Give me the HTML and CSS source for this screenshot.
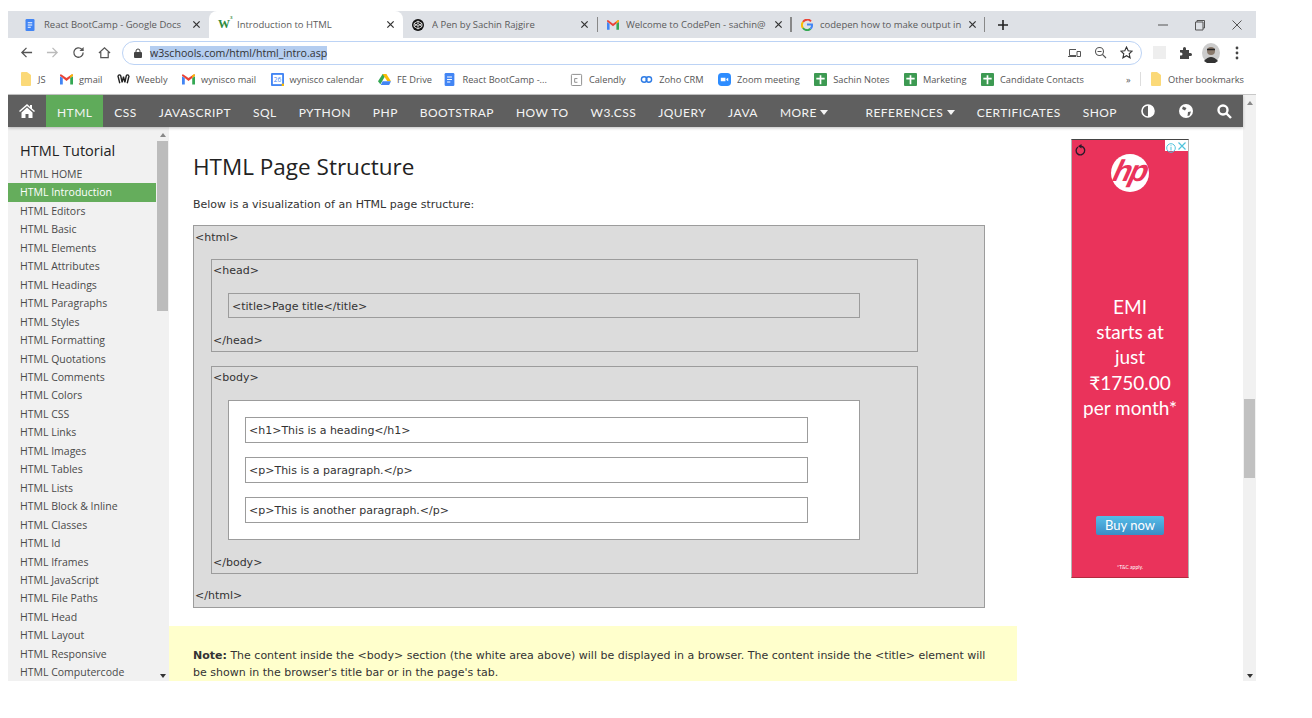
FILE: index.html
```html
<!DOCTYPE html>
<html lang="en">
<head>
  <meta charset="UTF-8">
  <title>Introduction to HTML</title>
  <link rel="stylesheet" href="styles.css">
</head>
<body>
  <svg class="defs" width="0" height="0">
    <symbol id="i-doc" viewBox="0 0 12 16"><rect width="12" height="16" rx="1.5" fill="#4285f4"/><path d="M3 5h6M3 8h6M3 11h4" stroke="#fff" stroke-width="1.3"/></symbol>
    <symbol id="i-gmail" viewBox="0 0 14 11"><path d="M0 2v9h3V4z" fill="#4285f4"/><path d="M14 2v9h-3V4z" fill="#34a853"/><path d="M0 1.5 7 7l7-5.500V0h-1.500L7 4 1.500 0H0z" fill="#ea4335"/><path d="M11 3.500V1l1.500-1H14v1.500z" fill="#fbbc04"/></symbol>
    <symbol id="i-sheet" viewBox="0 0 14 14"><rect width="14" height="14" rx="1" fill="#3d9a52"/><path d="M2.500 6h9M7 2.500V12" stroke="#fff" stroke-width="1.800"/></symbol>
    <symbol id="i-folder" viewBox="0 0 10 14"><path d="M0 1q0-1 1-1h5l4 3v10q0 1-1 1H1q-1 0-1-1z" fill="#fbd978"/></symbol>
    <symbol id="i-x" viewBox="0 0 10 10"><path d="M1.500 1.500l7 7M8.500 1.500l-7 7" stroke="#333" stroke-width="1.400"/></symbol>
  </svg>

  <div class="window">
    <div class="tabs">
      <div class="tab">
        <svg class="tab-icon"><use href="#i-doc"/></svg>
        <span class="tab-title">React BootCamp - Google Docs</span>
        <svg class="tab-x"><use href="#i-x"/></svg>
      </div>
      <div class="tab tab-active">
        <span class="w3-icon">W<sup>3</sup></span>
        <span class="tab-title">Introduction to HTML</span>
        <svg class="tab-x"><use href="#i-x"/></svg>
      </div>
      <div class="tab">
        <svg class="tab-icon" viewBox="0 0 12 12"><circle cx="6" cy="6" r="6" fill="#111"/><path d="M6 2 10 4.500v3L6 10 2 7.500v-3zM2 4.500 6 7l4-2.500M6 7v3M6 2v2.500M2 7.500 6 4.500l4 3" fill="none" stroke="#fff" stroke-width=".8"/></svg>
        <span class="tab-title">A Pen by Sachin Rajgire</span>
        <svg class="tab-x"><use href="#i-x"/></svg>
      </div>
      <div class="tab tab-sep">
        <svg class="tab-icon"><use href="#i-gmail"/></svg>
        <span class="tab-title">Welcome to CodePen - sachin@</span>
        <svg class="tab-x"><use href="#i-x"/></svg>
      </div>
      <div class="tab tab-sep">
        <svg class="tab-icon" viewBox="0 0 12 12" fill="none" stroke-width="2"><path d="M10 2.300A5 5 0 0 0 2 3" stroke="#ea4335"/><path d="M2 3a5 5 0 0 0 0 6" stroke="#fbbc04"/><path d="M2 9a5 5 0 0 0 7.500.800" stroke="#34a853"/><path d="M9.500 9.800A5 5 0 0 0 11 5.500H6" stroke="#4285f4"/></svg>
        <span class="tab-title">codepen how to make output in</span>
        <svg class="tab-x"><use href="#i-x"/></svg>
      </div>
      <div class="tab-new">
        <svg width="12" height="12" viewBox="0 0 12 12"><path d="M6 1v10M1 6h10" stroke="#222" stroke-width="1.600"/></svg>
      </div>
      <div class="win-controls">
        <svg width="12" height="12" viewBox="0 0 12 12"><path d="M1 6h10" stroke="#555"/></svg>
        <svg width="12" height="12" viewBox="0 0 12 12" fill="none" stroke="#555"><path d="M3 3V1.500h7.500V9H9M1.500 3H9v8H1.500z"/></svg>
        <svg width="12" height="12" viewBox="0 0 12 12"><path d="M1.500 1.500l9 9M10.500 1.500l-9 9" stroke="#555"/></svg>
      </div>
    </div>

    <div class="toolbar">
      <svg class="tool-btn" viewBox="0 0 14 14" fill="none" stroke="#555" stroke-width="1.400"><path d="M13 7H2M7 2 2 7l5 5"/></svg>
      <svg class="tool-btn" viewBox="0 0 14 14" fill="none" stroke="#bbb" stroke-width="1.400"><path d="M1 7h11M7 2l5 5-5 5"/></svg>
      <svg class="tool-btn" viewBox="0 0 14 14" fill="none" stroke="#555" stroke-width="1.400"><path d="M12 7a5 5 0 1 1-1.500-3.500L12 5"/><path d="M12.500 1v4.500H8" fill="#555" stroke="none"/></svg>
      <svg class="tool-btn" viewBox="0 0 14 14" fill="none" stroke="#555" stroke-width="1.300"><path d="M1 7.500 7 2l6 5.500M3 6.500V12.500h8V6.500"/></svg>
      <div class="omnibox">
        <svg class="lock" width="8" height="10" viewBox="0 0 8 10"><rect y="4" width="8" height="6" rx="1" fill="#444"/><path d="M2 4.500V3a2 2 0 0 1 4 0v1.500" fill="none" stroke="#444"/></svg>
        <span class="url">w3schools.com/html/html_intro.asp</span>
        <div class="omni-icons">
          <svg width="13" height="12" viewBox="0 0 13 12" fill="none" stroke="#555"><path d="M8 2.500H1.500v6H8M0 9.500h8M9 4.500h3.500v5H9z"/></svg>
          <svg width="13" height="13" viewBox="0 0 13 13" fill="none" stroke="#555" stroke-width="1.100"><circle cx="5.500" cy="5.500" r="4"/><path d="M8.500 8.500 12 12M3.500 5.500h4"/></svg>
          <svg width="13" height="13" viewBox="0 0 13 13" fill="none" stroke="#333" stroke-width="1.100"><path d="m6.500 1 1.700 3.700 4 .4-3 2.700.9 4-3.600-2.100-3.600 2.100.9-4-3-2.700 4-.4z"/></svg>
        </div>
      </div>
      <div class="ext-blur"></div>
      <svg class="puzzle" width="13" height="13" viewBox="0 0 13 13"><path d="M1 4h3V2.500a1.500 1.500 0 0 1 3 0V4h3v3h1.500a1.500 1.500 0 0 1 0 3H10v3H1V9.500h1a1.500 1.500 0 0 0 0-3H1z" fill="#444"/></svg>
      <svg class="avatar" width="18" height="20" viewBox="0 0 18 20"><ellipse cx="9" cy="10" rx="9" ry="10" fill="#ccc"/><circle cx="9" cy="8" r="4" fill="#8a7a6c"/><path d="M5 6.500h8" stroke="#222" stroke-width="1.500"/><path d="M2 18q7-8 14 0l-3 2H5z" fill="#333"/></svg>
      <svg class="dots" width="4" height="14" viewBox="0 0 4 14"><circle cx="2" cy="2" r="1.400" fill="#444"/><circle cx="2" cy="7" r="1.400" fill="#444"/><circle cx="2" cy="12" r="1.400" fill="#444"/></svg>
    </div>

    <div class="bookmarks">
      <span class="bm"><svg class="bm-folder"><use href="#i-folder"/></svg>JS</span>
      <span class="bm"><svg class="bm-icon"><use href="#i-gmail"/></svg>gmail</span>
      <span class="bm"><svg class="bm-icon" viewBox="0 0 14 12" fill="none" stroke="#222" stroke-width="1.500"><path d="M1 2q2-2 3 0l1.500 7 1.500-6 1.500 6L10 2q1-2 3 0M1 2l2 8M13 2l-2 8"/></svg>Weebly</span>
      <span class="bm"><svg class="bm-icon"><use href="#i-gmail"/></svg>wynisco mail</span>
      <span class="bm"><svg class="bm-icon" viewBox="0 0 14 14"><rect width="14" height="14" rx="1" fill="#4285f4"/><rect x="2" y="2" width="10" height="10" fill="#fff"/><path d="M11.500 11.500H14V14h-2.500z" fill="#fbbc04"/><text x="7" y="10" text-anchor="middle" font-size="7" fill="#4285f4">26</text></svg>wynisco calendar</span>
      <span class="bm"><svg class="bm-icon" viewBox="0 0 14 12"><path d="M5 0h4l-4.500 8L2.500 11 0 8z" fill="#34a853"/><path d="M5 0h4l5 8H10z" fill="#fbbc04"/><path d="M3 12h9l2-4H5z" fill="#4285f4"/></svg>FE Drive</span>
      <span class="bm bm-tight"><svg class="bm-icon"><use href="#i-doc"/></svg>React BootCamp -...</span>
      <span class="bm bm-gap"><svg class="bm-icon" viewBox="0 0 14 14" fill="none" stroke="#888"><rect x="1.500" y="1.500" width="11" height="12" rx="1"/><path d="M8 6H5v4h3"/></svg>Calendly</span>
      <span class="bm"><svg class="bm-icon" viewBox="0 0 14 10" fill="none" stroke="#2d7be5" stroke-width="1.500"><circle cx="4.500" cy="5" r="3"/><circle cx="9.500" cy="5" r="3"/></svg>Zoho CRM</span>
      <span class="bm"><svg class="bm-icon" viewBox="0 0 14 14"><rect width="14" height="14" rx="4" fill="#2d8cff"/><path d="M3 5h5v4H3zM9 6.500 11 5v4L9 7.500z" fill="#fff"/></svg>Zoom meeting</span>
      <span class="bm"><svg class="bm-icon"><use href="#i-sheet"/></svg>Sachin Notes</span>
      <span class="bm"><svg class="bm-icon"><use href="#i-sheet"/></svg>Marketing</span>
      <span class="bm"><svg class="bm-icon"><use href="#i-sheet"/></svg>Candidate Contacts</span>
      <span class="bm-more">»</span>
      <span class="bm bm-other"><svg class="bm-folder"><use href="#i-folder"/></svg>Other bookmarks</span>
    </div>

    <div class="viewport">
      <div class="page">
        <nav class="topnav">
          <svg class="nav-home" width="16" height="14" viewBox="0 0 16 14"><path d="M8 0 0 7l1 1 7-6 7 6 1-1-3-2.600V1h-2v1.800zM2.500 8.500 8 3.500l5.500 5V14H9.500v-4h-3v4h-4z" fill="#fff"/></svg>
          <a class="nav-link nav-active">HTML</a>
          <a class="nav-link">CSS</a>
          <a class="nav-link">JAVASCRIPT</a>
          <a class="nav-link">SQL</a>
          <a class="nav-link">PYTHON</a>
          <a class="nav-link">PHP</a>
          <a class="nav-link">BOOTSTRAP</a>
          <a class="nav-link">HOW TO</a>
          <a class="nav-link">W3.CSS</a>
          <a class="nav-link">JQUERY</a>
          <a class="nav-link">JAVA</a>
          <a class="nav-link nav-more">MORE <i class="caret"></i></a>
          <a class="nav-link">REFERENCES <i class="caret"></i></a>
          <a class="nav-link">CERTIFICATES</a>
          <a class="nav-link">SHOP</a>
          <div class="nav-icons">
            <svg width="14" height="14" viewBox="0 0 14 14"><circle cx="7" cy="7" r="6" fill="none" stroke="#fff" stroke-width="1.600"/><path d="M7 1a6 6 0 0 1 0 12z" fill="#fff"/></svg>
            <svg width="14" height="14" viewBox="0 0 14 14"><circle cx="7" cy="7" r="7" fill="#fff"/><path d="M4 2.500 7.500 4 6 6.500 3 5zM9 8l3-.5-1.500 4-2 .5z" fill="#5f5f5f"/></svg>
            <svg width="15" height="15" viewBox="0 0 15 15" fill="none" stroke="#fff" stroke-width="2.400"><circle cx="6" cy="6" r="4.500"/><path d="m9.500 9.500 4.500 4.500"/></svg>
          </div>
        </nav>

        <div class="columns">
          <aside class="sidebar">
            <div class="side-list">
              <h3 class="side-title">HTML Tutorial</h3>
              <a class="side-link">HTML HOME</a>
              <a class="side-link side-active">HTML Introduction</a>
              <a class="side-link">HTML Editors</a>
              <a class="side-link">HTML Basic</a>
              <a class="side-link">HTML Elements</a>
              <a class="side-link">HTML Attributes</a>
              <a class="side-link">HTML Headings</a>
              <a class="side-link">HTML Paragraphs</a>
              <a class="side-link">HTML Styles</a>
              <a class="side-link">HTML Formatting</a>
              <a class="side-link">HTML Quotations</a>
              <a class="side-link">HTML Comments</a>
              <a class="side-link">HTML Colors</a>
              <a class="side-link">HTML CSS</a>
              <a class="side-link">HTML Links</a>
              <a class="side-link">HTML Images</a>
              <a class="side-link">HTML Tables</a>
              <a class="side-link">HTML Lists</a>
              <a class="side-link">HTML Block &amp; Inline</a>
              <a class="side-link">HTML Classes</a>
              <a class="side-link">HTML Id</a>
              <a class="side-link">HTML Iframes</a>
              <a class="side-link">HTML JavaScript</a>
              <a class="side-link">HTML File Paths</a>
              <a class="side-link">HTML Head</a>
              <a class="side-link">HTML Layout</a>
              <a class="side-link">HTML Responsive</a>
              <a class="side-link">HTML Computercode</a>
            </div>
            <div class="side-scroll">
              <i class="arrow-up"></i>
              <div class="side-thumb"></div>
              <i class="arrow-down"></i>
            </div>
          </aside>

          <main class="content">
            <h1 class="page-title">HTML Page Structure</h1>
            <p class="intro">Below is a visualization of an HTML page structure:</p>

            <div class="tree tree-html">
              <div class="tag tag-root">&lt;html&gt;</div>
              <div class="tree tree-section">
                <div class="tag">&lt;head&gt;</div>
                <div class="tree tree-title">&lt;title&gt;Page title&lt;/title&gt;</div>
                <div class="tag tag-end">&lt;/head&gt;</div>
              </div>
              <div class="tree tree-section tree-body">
                <div class="tag">&lt;body&gt;</div>
                <div class="tree tree-white">
                  <div class="tree tree-el">&lt;h1&gt;This is a heading&lt;/h1&gt;</div>
                  <div class="tree tree-el">&lt;p&gt;This is a paragraph.&lt;/p&gt;</div>
                  <div class="tree tree-el">&lt;p&gt;This is another paragraph.&lt;/p&gt;</div>
                </div>
                <div class="tag tag-end">&lt;/body&gt;</div>
              </div>
              <div class="tag tag-root tag-last">&lt;/html&gt;</div>
            </div>

            <div class="note">
              <p><b>Note:</b> The content inside the &lt;body&gt; section (the white area above) will be displayed in a browser. The content inside the &lt;title&gt; element will be shown in the browser's title bar or in the page's tab.</p>
            </div>
          </main>

          <div class="ad-col">
            <div class="ad">
              <div class="ad-top">
                <svg width="11" height="12" viewBox="0 0 11 12" fill="none" stroke="#2a1a2a" stroke-width="1.400"><path d="M3 3a4.300 4.300 0 1 0 3-.7"/><path d="M6.500 0v4.500L3 2.300z" fill="#2a1a2a" stroke="none"/></svg>
                <div class="ad-choice">
                  <svg width="10" height="10" viewBox="0 0 10 10" fill="none" stroke="#4fc3dc"><circle cx="5" cy="5" r="4.300"/><path d="M5 4v3.500M5 2.300v1"/></svg>
                  <svg width="10" height="10" viewBox="0 0 10 10" fill="none" stroke="#4fc3dc" stroke-width="1.200"><path d="m1.500 1.500 7 7M8.500 1.500l-7 7"/></svg>
                </div>
              </div>
              <div class="hp-logo"><span>hp</span></div>
              <div class="ad-text">EMI<br>starts at<br>just<br>₹1750.00<br>per month*</div>
              <div class="ad-btn">Buy now</div>
              <div class="ad-small">*T&amp;C apply.</div>
            </div>
          </div>
        </div>
      </div>

      <div class="page-scroll">
        <i class="arrow-up"></i>
        <div class="page-thumb"></div>
        <i class="arrow-down"></i>
      </div>
    </div>
  </div>
</body>
</html>
```

FILE: styles.css
```css
body {
  margin: 0;
  background-color: white;
  font-family: "Open Sans", "Liberation Sans", sans-serif;
}
.defs {
  position: absolute;
}
.window {
  width: 1248px;
  height: 670px;
  margin: 11px 0 0 8px;
  overflow: hidden;
  display: flex;
  flex-direction: column;
}

/* browser tabs */
.tabs {
  height: 27px;
  flex: none;
  display: flex;
  align-items: stretch;
  padding-left: 7px;
  background-color: #dee1e6;
}
.tab {
  width: 194px;
  box-sizing: border-box;
  padding: 0 8px 0 9px;
  display: flex;
  align-items: center;
  position: relative;
  color: #5a5a5a;
  font-size: 9.5px;
}
.tab-active {
  background-color: white;
  border-radius: 8px 8px 0 0;
}
.tab-sep::after {
  content: "";
  position: absolute;
  right: 0;
  top: 6px;
  height: 15px;
  width: 1px;
  background-color: #888;
}
.tab-sep::before {
  content: "";
  position: absolute;
  left: 0;
  top: 6px;
  height: 15px;
  width: 1px;
  background-color: #888;
}
.tab-icon {
  width: 12px;
  height: 12px;
  flex: none;
  margin-right: 8px;
}
.tab-sep {
  padding-left: 10px;
}
.tab-sep .tab-icon {
  margin-right: 7px;
}
.w3-icon {
  width: 12px;
  margin-right: 7px;
  font: bold 12px "Liberation Serif", serif;
  color: #2e8b3d;
  flex: none;
}
.w3-icon sup {
  font-size: 5px;
  position: absolute;
  top: 4px;
}
.tab-title {
  flex: 1;
  overflow: hidden;
  white-space: nowrap;
}
.tab-x {
  width: 9px;
  height: 9px;
  flex: none;
  margin-left: 4px;
}
.tab-new {
  margin-left: 12px;
  display: flex;
  align-items: center;
}
.win-controls {
  margin-left: auto;
  padding-right: 13px;
  display: flex;
  align-items: center;
  gap: 25px;
}

/* address bar */
.toolbar {
  height: 29px;
  flex: none;
  display: flex;
  align-items: center;
  padding-left: 12px;
  background-color: white;
}
.tool-btn {
  width: 13px;
  height: 13px;
  margin-right: 13px;
  flex: none;
}
.omnibox {
  width: 1020px;
  height: 24px;
  box-sizing: border-box;
  margin-left: -2px;
  padding: 0 8px 0 11px;
  display: flex;
  align-items: center;
  border: 1.500px solid #bcd3f5;
  border-radius: 13px;
  font-size: 10.600px;
  color: #333;
}
.lock {
  margin-right: 8px;
}
.url {
  background-color: #b4cdf0;
  line-height: 14px;
}
.omni-icons {
  margin-left: auto;
  display: flex;
  align-items: center;
  gap: 13px;
}
.ext-blur {
  width: 13px;
  height: 13px;
  margin-left: 11px;
  background-color: #eee;
}
.puzzle {
  margin-left: 13px;
}
.avatar {
  margin-left: 10px;
}
.dots {
  margin-left: 15px;
}

/* bookmarks */
.bookmarks {
  height: 27px;
  flex: none;
  box-sizing: border-box;
  padding: 0 0 3px 13px;
  display: flex;
  align-items: center;
  gap: 14.500px;
  background-color: white;
  font-size: 9.250px;
  color: #555;
}
.bm {
  display: flex;
  align-items: center;
  white-space: nowrap;
}
.bm-icon {
  width: 13px;
  height: 13px;
  margin-right: 6px;
}
.bm-folder {
  width: 10px;
  height: 14px;
  margin-right: 7px;
}
.bm-tight {
  margin-left: -3px;
}
.bm-gap {
  margin-left: 8.500px;
}
.bm-more {
  margin: 0 -5px 0 auto;
}
.bm-other {
  margin-right: 12px;
  padding-left: 10px;
  border-left: 1px solid #ddd;
}

/* page */
.viewport {
  flex: 1;
  display: flex;
  min-height: 0;
  border-top: 1px solid #c8c8c8;
}
.page {
  width: 1235px;
  display: flex;
  flex-direction: column;
}
.topnav {
  height: 32px;
  flex: none;
  display: flex;
  align-items: stretch;
  background-color: #5f5f5f;
  color: #f4f4f4;
  font-family: "Lato", sans-serif;
  font-size: 12px;
  letter-spacing: .45px;
  box-shadow: 0 1px 3px rgba(0,0,0,.25);
  position: relative;
}
.nav-home {
  flex: none;
  align-self: center;
  margin: 0 11px;
}
.nav-link {
  padding: 0 11px;
  line-height: 35px;
  white-space: nowrap;
}
.nav-active {
  background-color: #5fab5a;
}
.nav-more {
  margin-right: 15px;
}
.caret {
  display: inline-block;
  border: 4px solid transparent;
  border-top: 5px solid #f4f4f4;
  border-bottom: 0;
  vertical-align: 2px;
}
.nav-icons {
  display: flex;
  align-items: center;
  gap: 24px;
  margin-left: 13px;
}

.columns {
  flex: 1;
  display: flex;
  min-height: 0;
}
.sidebar {
  width: 161px;
  flex: none;
  display: flex;
  background-color: #f1f1f1;
}
.side-list {
  width: 148px;
  flex: none;
  color: #4a4a4a;
  font-size: 10.5px;
}
.side-title {
  margin: 14px 0 4px 12px;
  font-size: 14.500px;
  line-height: 20px;
  font-weight: normal;
  color: #222;
}
.side-link {
  display: block;
  padding-left: 12px;
  line-height: 18.460px;
  white-space: nowrap;
}
.side-active {
  background-color: #65ad5c;
  color: white;
}
.side-scroll {
  width: 11px;
  margin-left: 1px;
  display: flex;
  flex-direction: column;
  align-items: center;
}
.side-thumb {
  width: 11px;
  height: 170px;
  margin-top: 4px;
  background-color: #bcbcbc;
}
.arrow-up {
  margin-top: 6px;
  border: 3px solid transparent;
  border-bottom: 4px solid #888;
  border-top: 0;
}
.arrow-down {
  margin-top: auto;
  margin-bottom: 3px;
  border: 3px solid transparent;
  border-top: 4px solid #333;
  border-bottom: 0;
}

.content {
  width: 848px;
  flex: none;
  font-family: "DejaVu Sans", sans-serif;
  font-size: 11px;
  color: #333;
}
.page-title {
  margin: 24px 0 0 24px;
  font-family: "Open Sans", sans-serif;
  font-size: 22.500px;
  line-height: 32px;
  font-weight: normal;
  color: #222;
}
.intro {
  margin: 14px 0 0 24px;
  line-height: 16px;
}
.tree {
  border: 1px solid #9c9c9c;
  background-color: #dcdcdc;
}
.tree-html {
  height: 381px;
  margin: 12px 0 0 24px;
  padding-left: 17px;
  width: 773px;
}
.tree-section {
  width: 705px;
  margin-top: 10px;
}
.tree-body {
  margin-top: 14px;
}
.tag {
  padding-left: 1px;
  line-height: 22px;
}
.tag-root {
  margin-left: -17px;
  padding-top: 1px;
}
.tree-section .tag-end {
  margin-top: 13px;
  line-height: 20px;
}
.tag-last {
  margin-top: 10px;
}
.tree-title {
  height: 23px;
  margin: 11px 0 0 16px;
  padding-left: 3px;
  width: 627px;
  line-height: 25px;
}
.tree-white {
  width: 632px;
  box-sizing: border-box;
  margin: 11px 0 0 16px;
  padding: 16px 51px 16px 16px;
  background-color: white;
}
.tree-el {
  height: 24px;
  padding-left: 3px;
  line-height: 25px;
  background-color: white;
}
.tree-el + .tree-el {
  margin-top: 14px;
}
.note {
  height: 56px;
  margin-top: 18px;
  padding: 21px 24px 0;
  box-sizing: border-box;
  background-color: #ffffcc;
}
.note p {
  margin: 0;
  line-height: 17px;
}

/* ad */
.ad-col {
  flex: 1;
  background-color: white;
}
.ad {
  width: 118px;
  height: 439px;
  box-sizing: border-box;
  margin: 12px 0 0 54px;
  position: relative;
  display: flex;
  flex-direction: column;
  align-items: center;
  border: 1px solid #b5b5b5;
  border-bottom-color: #b32a3f;
  border-top-color: #444;
  background-color: #ea335b;
  color: white;
  font-family: "Lato", sans-serif;
}
.ad-top {
  height: 11px;
  width: 100%;
  display: flex;
  justify-content: space-between;
  padding-left: 3px;
  box-sizing: border-box;
}
.ad-top svg:first-child {
  margin-top: 4px;
}
.ad-choice {
  width: 23px;
  height: 11px;
  display: flex;
  justify-content: space-around;
  align-items: center;
  background-color: white;
}
.hp-logo {
  width: 38px;
  height: 38px;
  margin-top: 3px;
  border-radius: 50%;
  background-color: white;
  color: #ea335b;
  text-align: center;
  font: italic bold 30px/34px "Liberation Sans", sans-serif;
  letter-spacing: -2px;
}
.hp-logo span {
  display: inline-block;
  transform: skewX(-14deg);
}
.ad-text {
  margin-top: 102px;
  text-align: center;
  font-size: 19px;
  line-height: 25.200px;
}
.ad-btn {
  width: 68px;
  height: 19px;
  margin-top: 96px;
  border-radius: 2px;
  background: linear-gradient(#55bde8, #3a8cc5);
  text-align: center;
  font-size: 13px;
  line-height: 19px;
}
.ad-small {
  margin-top: 28px;
  font-size: 5px;
  line-height: 8px;
}

.page-scroll {
  flex: 1;
  display: flex;
  flex-direction: column;
  align-items: center;
  background-color: #f1f1f1;
}
.page-thumb {
  width: 11px;
  height: 79px;
  margin-top: 294px;
  background-color: #c1c1c1;
}
```
